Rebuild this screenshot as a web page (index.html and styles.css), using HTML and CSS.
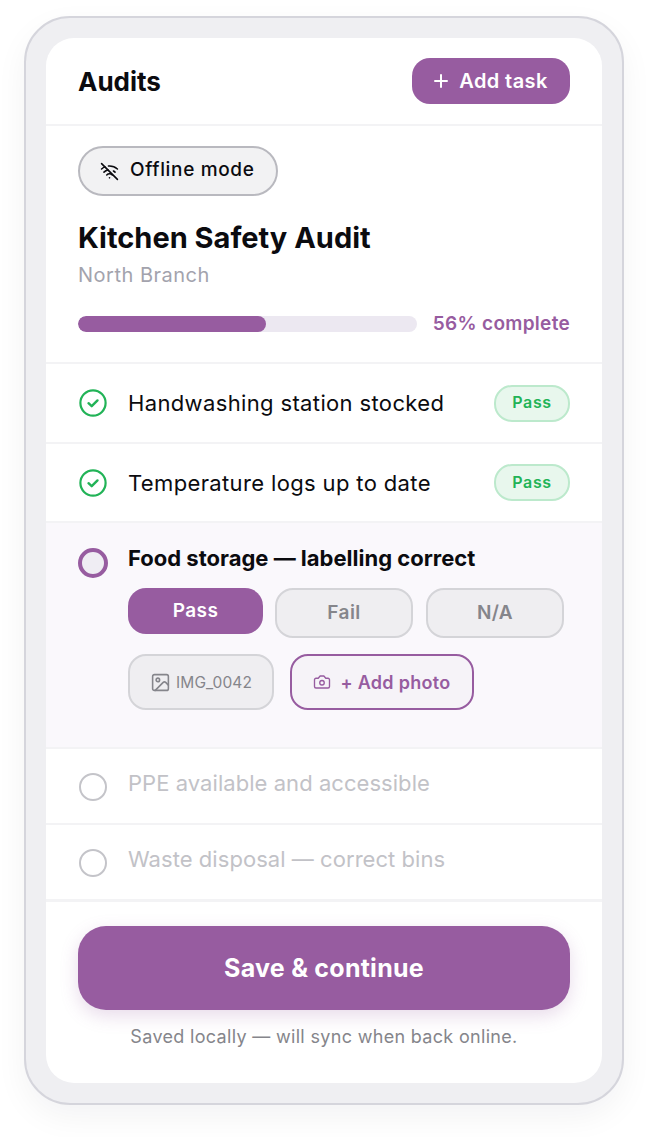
FILE: index.html
```html
<!DOCTYPE html>
<html lang="en">
<head>
    <meta charset="UTF-8">
    <meta name="viewport" content="width=device-width, initial-scale=1.0">
    <title>Audits</title>
    <link rel="stylesheet" href="styles.css">
</head>
<body>
    <div class="frame">
        <main class="screen">
            <header class="topbar">
                <h1>Audits</h1>
                <button class="add-task" type="button">
                    <svg class="icon-plus" viewBox="0 0 14 14"><path d="M7 1v12M1 7h12"/></svg>
                    Add task
                </button>
            </header>

            <section class="summary">
                <div class="offline-chip">
                    <svg class="icon" viewBox="0 0 24 24"><path d="M12 20h.01"/><path d="M8.5 16.429a5 5 0 0 1 7 0"/><path d="M5 12.859a10 10 0 0 1 5.17-2.69"/><path d="M19 12.859a10 10 0 0 0-2.007-1.523"/><path d="M2 8.82a15 15 0 0 1 4.177-2.643"/><path d="M22 8.82a15 15 0 0 0-11.288-3.764"/><path d="m2 2 20 20"/></svg>
                    <span class="chip-text">Offline mode</span>
                </div>
                <h2>Kitchen Safety Audit</h2>
                <p class="branch">North Branch</p>
                <div class="progress-row">
                    <div class="progress"><div class="progress-fill"></div></div>
                    <span class="progress-label">56% complete</span>
                </div>
            </section>

            <!-- Checklist -->
            <div class="row row-done">
                <svg class="check" viewBox="0 0 30 30"><circle cx="15" cy="15" r="12.6"/><path d="m10.5 15.2 3.2 3 5.8-5.8"/></svg>
                <span class="row-text">Handwashing station stocked</span>
                <span class="badge">Pass</span>
            </div>
            <div class="row row-done row-second">
                <svg class="check" viewBox="0 0 30 30"><circle cx="15" cy="15" r="12.6"/><path d="m10.5 15.2 3.2 3 5.8-5.8"/></svg>
                <span class="row-text">Temperature logs up to date</span>
                <span class="badge">Pass</span>
            </div>

            <div class="row-active">
                <span class="radio radio-active"></span>
                <div class="active-body">
                    <div class="active-title">Food storage — labelling correct</div>
                    <div class="choices">
                        <button class="choice choice-on" type="button">Pass</button>
                        <button class="choice" type="button">Fail</button>
                        <button class="choice" type="button">N/A</button>
                    </div>
                    <div class="attachments">
                        <div class="attachment">
                            <svg class="icon-image" viewBox="0 0 24 24"><rect x="3" y="3" width="18" height="18" rx="2"/><circle cx="9" cy="9" r="2"/><path d="m21 15-3.086-3.086a2 2 0 0 0-2.828 0L6 21"/></svg>
                            IMG_0042
                        </div>
                        <button class="add-photo" type="button">
                            <svg class="icon-camera" viewBox="0 0 24 24"><path d="M14.5 4h-5L7 7H4a2 2 0 0 0-2 2v9a2 2 0 0 0 2 2h16a2 2 0 0 0 2-2V9a2 2 0 0 0-2-2h-3l-2.5-3z"/><circle cx="12" cy="13" r="3"/></svg>
                            + Add photo
                        </button>
                    </div>
                </div>
            </div>

            <div class="row row-todo">
                <span class="radio"></span>
                <span class="row-text">PPE available and accessible</span>
            </div>
            <div class="row row-todo">
                <span class="radio"></span>
                <span class="row-text">Waste disposal — correct bins</span>
            </div>

            <footer class="actions">
                <button class="save" type="button">Save &amp; continue</button>
                <p class="sync-note">Saved locally — will sync when back online.</p>
            </footer>
        </main>
    </div>
</body>
</html>
```

FILE: styles.css
```css
/* General Reset */
* {
    margin: 0;
    padding: 0;
    box-sizing: border-box;
}

body {
    font-family: Inter, 'Open Sans', sans-serif;
    background: #fff;
    color: #0b0b0f;
    padding: 16px 24px 32px;
}

button {
    font-family: inherit;
    cursor: pointer;
}

svg {
    display: block;
    flex-shrink: 0;
    fill: none;
    stroke: currentColor;
    stroke-linecap: round;
    stroke-linejoin: round;
}

.frame {
    height: 1089px;
    padding: 20px;
    background: #efeff2;
    border: 2px solid #d5d5dc;
    border-radius: 46px;
    box-shadow: 0 12px 32px rgba(20, 20, 40, 0.05);
}

.screen {
    height: 1045px;
    background: #fff;
    border-radius: 28px;
    overflow: hidden;
}

/* Header */
.topbar {
    height: 88px;
    padding: 20px 32px 0;
    display: flex;
    justify-content: space-between;
    align-items: flex-start;
    border-bottom: 2px solid #f3f3f5;
}

h1 {
    font-size: 26px;
    font-weight: 700;
    line-height: 48px;
}

.add-task {
    width: 158px;
    height: 46px;
    display: flex;
    align-items: center;
    justify-content: center;
    gap: 11px;
    background: #975ca0;
    color: #fff;
    border: none;
    border-radius: 18px;
    font-size: 20px;
    font-weight: 600;
    letter-spacing: 0.4px;
}

.icon-plus {
    width: 14px;
    height: 14px;
    stroke-width: 2;
}

/* Summary */
.summary {
    height: 238px;
    padding: 20px 32px 0;
    border-bottom: 2px solid #f3f3f5;
}

.offline-chip {
    width: 200px;
    height: 50px;
    display: flex;
    align-items: center;
    gap: 11px;
    padding-left: 20px;
    background: #f2f2f3;
    border: 2px solid #b9b9bf;
    border-radius: 25px;
    font-size: 19px;
    font-weight: 500;
    letter-spacing: 0.65px;
}

.chip-text {
    padding-bottom: 4px;
}

.icon {
    width: 19px;
    height: 19px;
    stroke-width: 2;
}

h2 {
    margin-top: 22px;
    font-size: 29px;
    font-weight: 700;
    line-height: 40px;
}

.branch {
    margin-top: 3px;
    font-size: 20px;
    letter-spacing: 0.5px;
    line-height: 28px;
    color: #a3a3ad;
}

.progress-row {
    margin-top: 23px;
    display: flex;
    align-items: center;
    justify-content: space-between;
}

.progress {
    width: 339px;
    height: 16px;
    background: #ece8f1;
    border-radius: 8px;
    overflow: hidden;
}

.progress-fill {
    width: 188px;
    height: 100%;
    background: #975ca0;
    border-radius: 8px;
}

.progress-label {
    font-size: 19px;
    font-weight: 600;
    letter-spacing: 0.3px;
    color: #975ca0;
}

/* Checklist rows */
.row {
    display: flex;
    align-items: center;
    padding: 0 32px;
    border-bottom: 2px solid #f3f3f5;
}

.row-done {
    height: 80px;
}

.row-second {
    height: 79px;
}

.row-todo {
    height: 76px;
}

.row-text {
    flex: 1;
    font-size: 22px;
    letter-spacing: 0.36px;
}

.check {
    width: 30px;
    height: 30px;
    margin-right: 20px;
    color: #22b357;
    stroke-width: 2.2;
}

.check path {
    stroke-width: 2.4;
}

.badge {
    width: 76px;
    height: 37px;
    display: flex;
    align-items: center;
    justify-content: center;
    padding-bottom: 2px;
    background: #e8f7ed;
    border: 2px solid #bce9cc;
    border-radius: 18px;
    color: #22b357;
    font-size: 16px;
    font-weight: 600;
    letter-spacing: 0.6px;
}

.radio {
    width: 28px;
    height: 28px;
    margin-left: 1px;
    margin-right: 21px;
    margin-top: 2px;
    border: 2.5px solid #c4c4c9;
    border-radius: 50%;
    flex-shrink: 0;
}

.radio-active {
    width: 30px;
    height: 30px;
    margin: 11px 20px 0 0;
    border: 4px solid #975ca0;
    background: #efedf3;
}

.row-todo .row-text {
    padding-bottom: 6px;
    letter-spacing: 0.05px;
    color: #c2c2c7;
}

/* Item being answered */
.row-active {
    height: 226px;
    display: flex;
    align-items: flex-start;
    padding: 14px 32px 0;
    background: #faf8fc;
    border-bottom: 2px solid #f3f3f5;
}

.active-title {
    font-size: 22px;
    font-weight: 700;
    line-height: 42px;
}

.choices {
    margin-top: 9px;
    display: flex;
    gap: 13px;
}

.choice {
    width: 138px;
    height: 50px;
    padding-bottom: 2px;
    background: #efeef1;
    border: 2px solid #d4d4d8;
    border-radius: 18px;
    color: #85858b;
    font-size: 19px;
    font-weight: 600;
    letter-spacing: 0.4px;
}

.choice-on {
    width: 135px;
    height: 46px;
    margin-right: -1px;
    background: #975ca0;
    border: none;
    color: #fff;
}

.attachments {
    margin-top: 16px;
    display: flex;
    gap: 16px;
}

.attachment {
    width: 146px;
    height: 56px;
    display: flex;
    align-items: center;
    justify-content: center;
    gap: 5px;
    background: #efeef1;
    border: 2px solid #d4d4d8;
    border-radius: 18px;
    color: #85858b;
    font-size: 15.5px;
    letter-spacing: 0.1px;
}

.icon-image {
    width: 21px;
    height: 21px;
    stroke-width: 1.8;
}

.add-photo {
    width: 184px;
    height: 56px;
    display: flex;
    align-items: center;
    justify-content: center;
    gap: 9px;
    background: #f6f3f8;
    border: 2px solid #975ca0;
    border-radius: 18px;
    color: #975ca0;
    font-size: 18px;
    font-weight: 600;
    letter-spacing: 0.3px;
}

.icon-camera {
    width: 18px;
    height: 18px;
    stroke-width: 1.8;
}

/* Footer */
.actions {
    padding: 24px 32px 0;
    border-top: 1px solid #f3f3f5;
}

.save {
    width: 492px;
    height: 84px;
    background: #975ca0;
    border: none;
    border-radius: 28px;
    color: #fff;
    font-size: 25px;
    font-weight: 700;
    letter-spacing: 0.25px;
    box-shadow: 0 6px 18px rgba(151, 92, 160, 0.22);
}

.sync-note {
    margin-top: 13px;
    text-align: center;
    font-size: 18px;
    letter-spacing: 0.32px;
    line-height: 28px;
    color: #85858b;
}
```
